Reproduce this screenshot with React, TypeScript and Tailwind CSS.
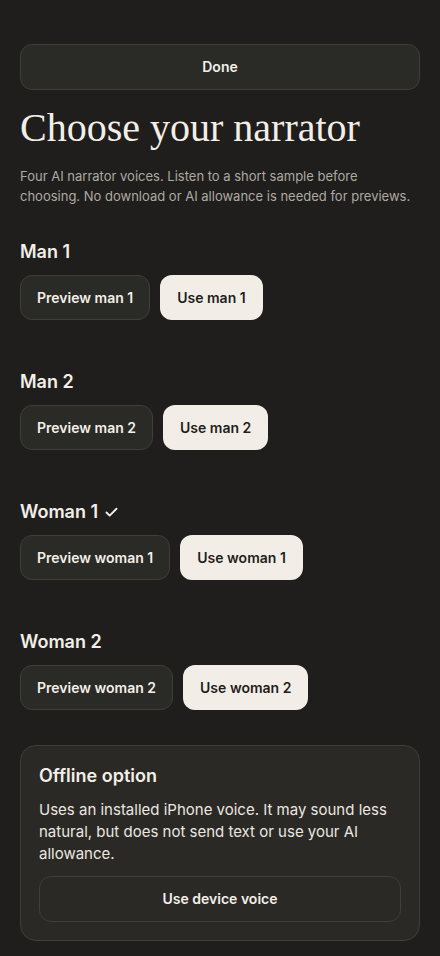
import React from 'react';
import { Check } from 'lucide-react';

const voices = [
  { name: 'Man 1', id: 'man 1', selected: false },
  { name: 'Man 2', id: 'man 2', selected: false },
  { name: 'Woman 1', id: 'woman 1', selected: true },
  { name: 'Woman 2', id: 'woman 2', selected: false },
];

export default function App() {
  return (
    <div
      className="min-h-screen bg-[#1f1e1c] text-[#f3efe8] px-5 pt-11 pb-4"
      style={{ fontFamily: 'Inter, "Noto Sans", sans-serif' }}
    >
      <button className="w-full h-[46px] rounded-xl border border-[#3f3e39] bg-[#2a2a26] text-sm font-semibold text-[#f3efe8]">
        Done
      </button>

      <h1 className="mt-[14px] text-[40px] leading-[48px] text-[#f3efe8] font-['Liberation_Serif',serif]">
        Choose your narrator
      </h1>

      <p className="mt-[14px] text-[13px] leading-5 text-[#aeaaa2]">
        Four AI narrator voices. Listen to a short sample before choosing. No download or AI allowance is needed for previews.
      </p>

      <div className="mt-[32px] flex flex-col gap-[48px]">
        {voices.map((v) => (
          <div key={v.id}>
            <h2 className="flex items-center gap-1.5 text-lg leading-7 font-semibold">
              {v.name}
              {v.selected && <Check size={15} strokeWidth={3} />}
            </h2>
            <div className="mt-[9px] flex gap-[10px]">
              <button className="h-[45px] px-4 rounded-xl border border-[#3f3e39] bg-[#2a2a26] text-sm font-semibold text-[#f3efe8]">
                Preview {v.id}
              </button>
              <button className="h-[45px] px-[17px] rounded-xl bg-[#f2eee7] text-sm font-semibold text-[#1f1e1c]">
                Use {v.id}
              </button>
            </div>
          </div>
        ))}
      </div>

      <div className="mt-[35px] rounded-2xl border border-[#3f3e39] bg-[#2a2925] px-[18px] pt-[16px] pb-[18px]">
        <h3 className="text-lg leading-7 font-semibold">Offline option</h3>
        <p className="mt-[9px] text-[15px] leading-[22px] text-[#ebe7e0]">
          Uses an installed iPhone voice. It may sound less natural, but does not send text or use your AI allowance.
        </p>
        <button className="mt-[11px] w-full h-[46px] rounded-xl border border-[#3f3e39] bg-[#2a2925] text-sm font-semibold text-[#f3efe8]">
          Use device voice
        </button>
      </div>
    </div>
  );
}
